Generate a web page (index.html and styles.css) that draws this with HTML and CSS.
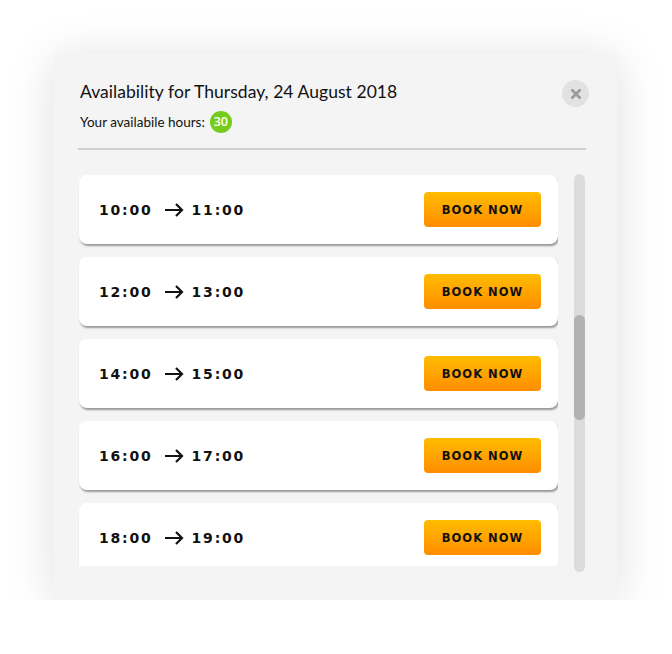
FILE: index.html
```html
<!DOCTYPE html>
<html>
<head>
<meta charset="utf-8">
<link rel="stylesheet" href="styles.css">
</head>
<body>
<div class="modal">
  <div class="header">
    <div class="heading">
      <h1 class="title">Availability for Thursday, 24 August 2018</h1>
      <div class="hours">Your availabile hours: <span class="badge">30</span></div>
    </div>
    <button class="close" aria-label="Close">
      <svg width="12" height="12" viewBox="0 0 12 12"><path d="M1.5 1.5 L10.5 10.5 M10.5 1.5 L1.5 10.5" stroke="#999" stroke-width="2.6" stroke-linecap="butt"/></svg>
    </button>
  </div>
  <div class="divider"></div>
  <div class="body">
    <div class="list">
      <div class="slot">
        <div class="time"><span>10:00</span><svg class="arrow" width="19" height="14" viewBox="0 0 19 14"><path d="M0 7 H17 M11 1 L17 7 L11 13" fill="none" stroke="#111" stroke-width="2.2"/></svg><span>11:00</span></div>
        <button class="book">BOOK NOW</button>
      </div>
      <div class="slot">
        <div class="time"><span>12:00</span><svg class="arrow" width="19" height="14" viewBox="0 0 19 14"><path d="M0 7 H17 M11 1 L17 7 L11 13" fill="none" stroke="#111" stroke-width="2.2"/></svg><span>13:00</span></div>
        <button class="book">BOOK NOW</button>
      </div>
      <div class="slot">
        <div class="time"><span>14:00</span><svg class="arrow" width="19" height="14" viewBox="0 0 19 14"><path d="M0 7 H17 M11 1 L17 7 L11 13" fill="none" stroke="#111" stroke-width="2.2"/></svg><span>15:00</span></div>
        <button class="book">BOOK NOW</button>
      </div>
      <div class="slot">
        <div class="time"><span>16:00</span><svg class="arrow" width="19" height="14" viewBox="0 0 19 14"><path d="M0 7 H17 M11 1 L17 7 L11 13" fill="none" stroke="#111" stroke-width="2.2"/></svg><span>17:00</span></div>
        <button class="book">BOOK NOW</button>
      </div>
      <div class="slot">
        <div class="time"><span>18:00</span><svg class="arrow" width="19" height="14" viewBox="0 0 19 14"><path d="M0 7 H17 M11 1 L17 7 L11 13" fill="none" stroke="#111" stroke-width="2.2"/></svg><span>19:00</span></div>
        <button class="book">BOOK NOW</button>
      </div>
    </div>
    <div class="scrollbar"><div class="thumb"></div></div>
  </div>
</div>
</body>
</html>
```

FILE: styles.css
```css
html, body {
  margin: 0;
  padding: 0;
  background: #ffffff;
}
body {
  padding: 54px 0 0 54px;
  font-family: "Lato", "DejaVu Sans", sans-serif;
  color: #111;
}
.modal {
  box-sizing: border-box;
  width: 563px;
  height: 546px;
  background: #f4f4f4;
  box-shadow: 0 4px 45px rgba(0, 0, 0, 0.13);
  padding: 27px 28px 0 24px;
}
.header {
  display: flex;
  justify-content: space-between;
  align-items: flex-start;
}
.heading {
  padding-left: 2px;
}
.title {
  margin: 0;
  font-size: 17.5px;
  font-weight: 400;
  line-height: 22px;
  color: #111;
  letter-spacing: 0.05px;
}
.hours {
  margin-top: 8px;
  font-size: 13.5px;
  line-height: 22px;
  display: flex;
  align-items: center;
  gap: 5px;
}
.badge {
  display: inline-flex;
  align-items: center;
  justify-content: center;
  width: 22px;
  height: 22px;
  border-radius: 50%;
  background: #76cc1a;
  color: #fff;
  font-family: "Open Sans", sans-serif;
  font-weight: 600;
  font-size: 12.5px;
}
.close {
  width: 27px;
  height: 27px;
  border-radius: 50%;
  border: none;
  background: #e2e2e2;
  padding: 0;
  margin-top: -1px;
  display: flex;
  align-items: center;
  justify-content: center;
  cursor: pointer;
}
.divider {
  height: 2px;
  background: #cfcfcf;
  margin: 15px 3px 0 0;
}
.body {
  display: flex;
  gap: 16px;
  margin-top: 25px;
}
.list {
  width: 479px;
  height: 391px;
  overflow: hidden;
  display: flex;
  flex-direction: column;
  gap: 13px;
  padding-left: 1px;
}
.slot {
  flex: none;
  box-sizing: border-box;
  height: 69px;
  background: #fff;
  border-radius: 8px;
  box-shadow: 1px 2px 2px rgba(0, 0, 0, 0.38);
  display: flex;
  align-items: center;
  justify-content: space-between;
  padding: 0 17px 0 20px;
}
.time {
  display: flex;
  align-items: center;
  font-family: "DejaVu Sans", sans-serif;
  font-weight: 700;
  font-size: 14px;
  letter-spacing: 1.8px;
  color: #111;
}
.arrow {
  margin: 0 8px 0 12px;
}
.book {
  width: 117px;
  height: 35px;
  border: none;
  border-radius: 4px;
  background: linear-gradient(#ffbc00, #ff8d00);
  font-family: "DejaVu Sans", sans-serif;
  font-weight: 700;
  font-size: 11.5px;
  letter-spacing: 1px;
  color: #111;
  padding: 0;
  cursor: pointer;
}
.scrollbar {
  width: 11px;
  height: 398px;
  margin-top: -1px;
  background: #dcdcdc;
  border-radius: 6px;
  position: relative;
}
.thumb {
  position: absolute;
  left: 0;
  top: 141px;
  width: 11px;
  height: 105px;
  border-radius: 6px;
  background: #b2b2b2;
}
```
